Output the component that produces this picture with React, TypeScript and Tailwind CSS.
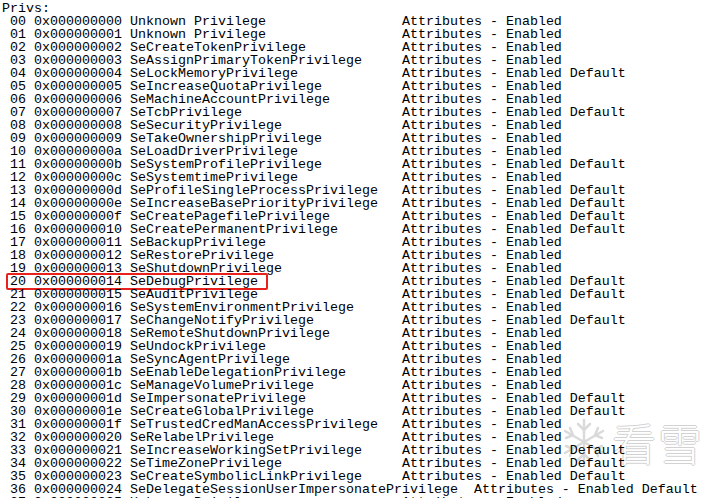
import React from 'react';

type Priv = [string, boolean];

// name, default flag
const privs: Priv[] = [
  ['Unknown Privilege', false],
  ['Unknown Privilege', false],
  ['SeCreateTokenPrivilege', false],
  ['SeAssignPrimaryTokenPrivilege', false],
  ['SeLockMemoryPrivilege', true],
  ['SeIncreaseQuotaPrivilege', false],
  ['SeMachineAccountPrivilege', false],
  ['SeTcbPrivilege', true],
  ['SeSecurityPrivilege', false],
  ['SeTakeOwnershipPrivilege', false],
  ['SeLoadDriverPrivilege', false],
  ['SeSystemProfilePrivilege', true],
  ['SeSystemtimePrivilege', false],
  ['SeProfileSingleProcessPrivilege', true],
  ['SeIncreaseBasePriorityPrivilege', true],
  ['SeCreatePagefilePrivilege', true],
  ['SeCreatePermanentPrivilege', true],
  ['SeBackupPrivilege', false],
  ['SeRestorePrivilege', false],
  ['SeShutdownPrivilege', false],
  ['SeDebugPrivilege', true],
  ['SeAuditPrivilege', true],
  ['SeSystemEnvironmentPrivilege', false],
  ['SeChangeNotifyPrivilege', true],
  ['SeRemoteShutdownPrivilege', false],
  ['SeUndockPrivilege', false],
  ['SeSyncAgentPrivilege', false],
  ['SeEnableDelegationPrivilege', false],
  ['SeManageVolumePrivilege', false],
  ['SeImpersonatePrivilege', true],
  ['SeCreateGlobalPrivilege', true],
  ['SeTrustedCredManAccessPrivilege', false],
  ['SeRelabelPrivilege', false],
  ['SeIncreaseWorkingSetPrivilege', true],
  ['SeTimeZonePrivilege', true],
  ['SeCreateSymbolicLinkPrivilege', true],
  ['SeDelegateSessionUserImpersonatePrivilege', true],
  ['Unknown Privilege', false],
];

function line(i: number, [name, def]: Priv) {
  const idx = String(i).padStart(2, '0');
  const hex = '0x' + i.toString(16).padStart(9, '0');
  const padded = name.length < 34 ? name.padEnd(34, ' ') : name + '  ';
  return ` ${idx} ${hex} ${padded}Attributes - Enabled${def ? ' Default' : ''}`;
}

export default function App() {
  return (
    <div className="relative w-[717px] h-[498px] overflow-hidden bg-white text-black">
      {/* watermark, sits behind the console text */}
      <div className="absolute left-[558px] top-[416px] flex items-center gap-[2px] text-white">
        <svg width="52" height="52" viewBox="0 0 52 52" fill="none" stroke="#dadada" strokeWidth="2.5" strokeLinecap="round">
          <path d="M26 4 L26 48 M7 15 L45 37 M7 37 L45 15" />
          <path d="M20 8 L26 14 L32 8 M20 44 L26 38 L32 44" />
          <path d="M8 22 L15 19 L12 12 M44 30 L37 33 L40 40" />
          <path d="M8 30 L15 33 L12 40 M44 22 L37 19 L40 12" />
        </svg>
        <span className="font-['Noto_Sans_CJK_SC',sans-serif] text-[44px] leading-none font-light tracking-[2px] [text-shadow:1px_0_0_#d2d2d2,-1px_0_0_#d2d2d2,0_1px_0_#d2d2d2,0_-1px_0_#d2d2d2]">
          看雪
        </span>
      </div>

      <div className="relative pt-[2px] pl-[2px] font-['Liberation_Mono',monospace] text-[13.33px] leading-[13px] whitespace-pre">
        <div>Privs:</div>
        {privs.map((p, i) => (
          <div key={i} className="relative">
            {line(i, p)}
            {i === 20 && (
              <span className="absolute left-[4px] top-[-2px] w-[262px] h-[17px] border-2 border-[#e8211d] rounded-[2px]" />
            )}
          </div>
        ))}
      </div>
    </div>
  );
}
